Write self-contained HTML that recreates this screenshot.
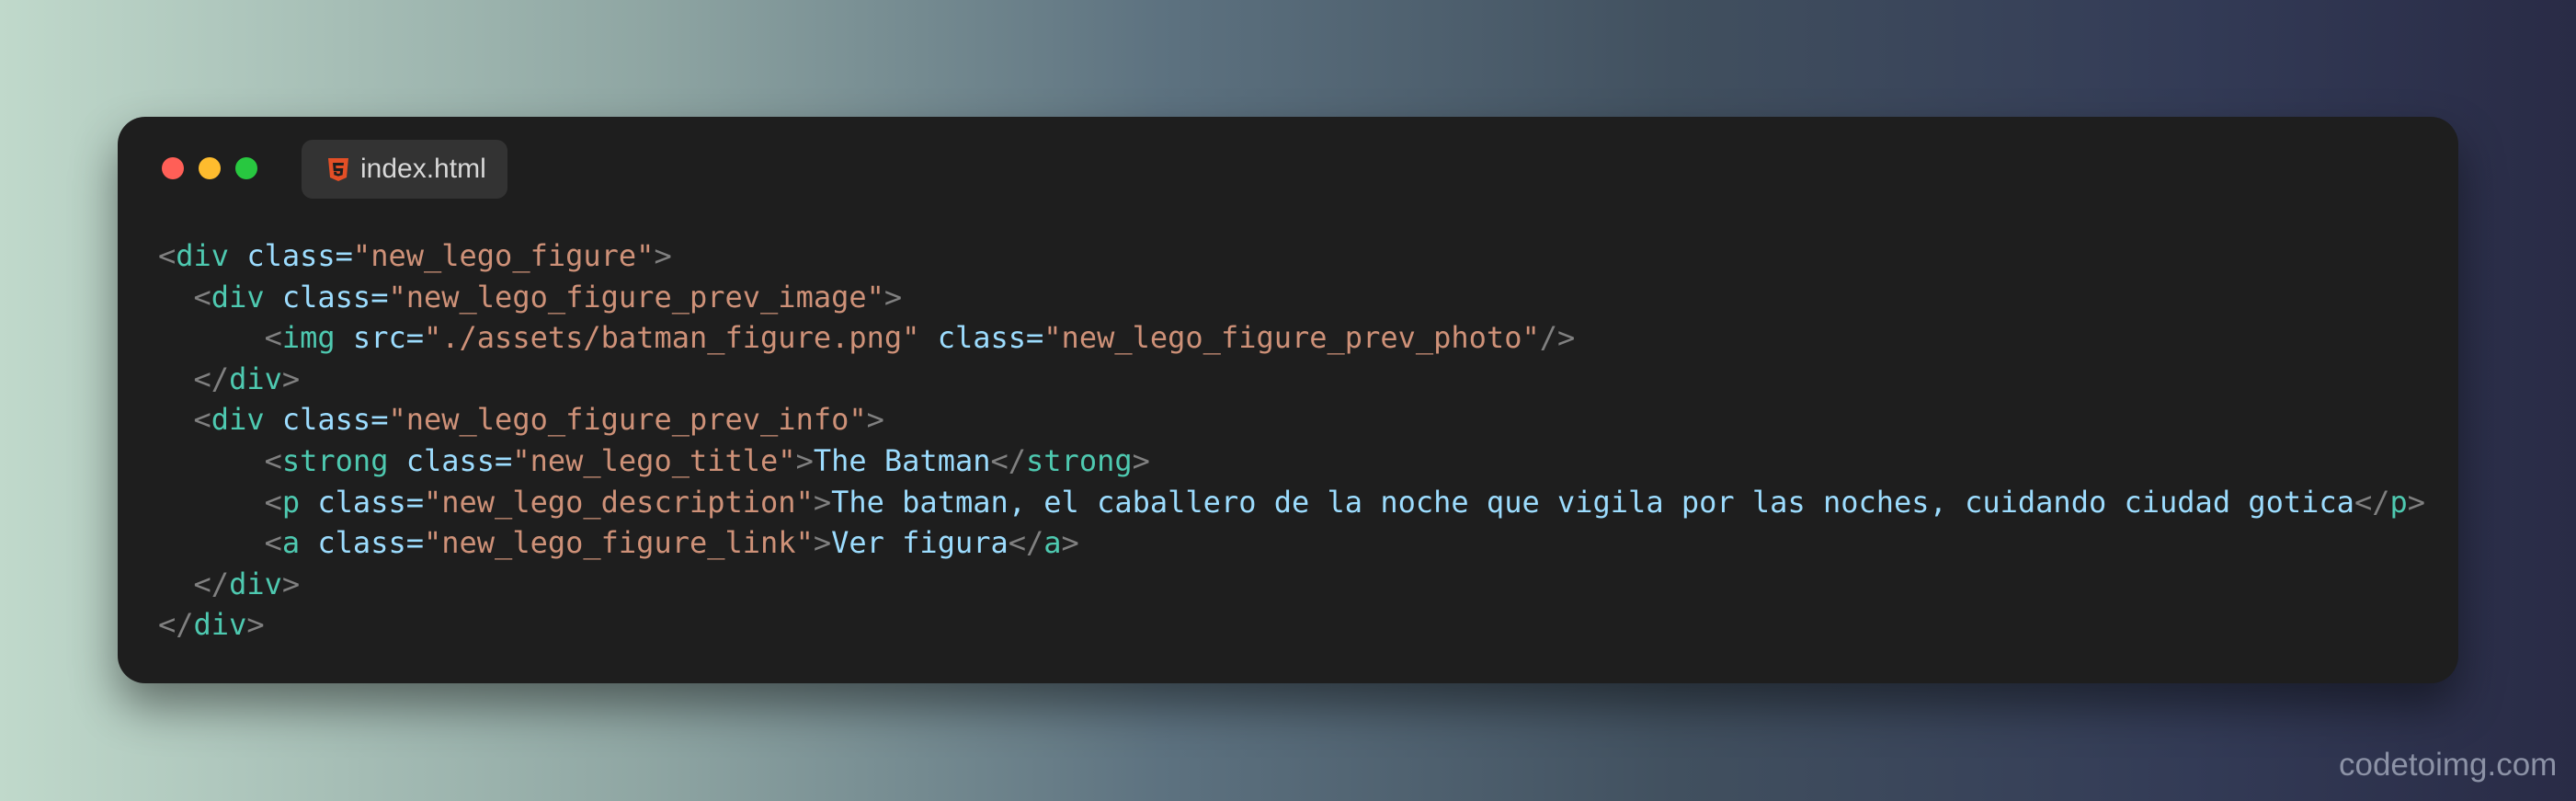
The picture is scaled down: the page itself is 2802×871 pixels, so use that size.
<!DOCTYPE html>
<html><head><meta charset="utf-8"><style>
html,body{margin:0;padding:0;width:2802px;height:871px;overflow:hidden}
body{background:linear-gradient(90deg,#c0d9cb 0%,#8fa6a3 25%,#5d7280 45%,#41505f 65%,#333b56 85%,#292b46 100%);position:relative;font-family:"Liberation Sans",sans-serif}
.win{position:absolute;left:128px;top:127px;width:2546px;height:616px;background:#1e1e1e;border-radius:30px;box-shadow:0 25px 50px rgba(0,0,0,.45)}
.dot{position:absolute;top:171px;width:24px;height:24px;border-radius:50%}
.tab{position:absolute;left:328px;top:152px;width:224px;height:64px;background:#333;border-radius:12px}
.tab span{position:absolute;left:64px;top:15px;font-size:30px;color:#d8d8d8}
pre{position:absolute;left:172px;top:256px;margin:0;font-family:"DejaVu Sans Mono","Liberation Mono",monospace;font-size:32px;line-height:44.6px;color:#9cdcfe}
.b{color:#808080}.t{color:#4ec9b0}.a{color:#9cdcfe}.s{color:#ce9178}
.wm{position:absolute;left:2544px;top:812px;font-size:35px;color:#8c92a6}
</style></head><body>
<div class="win"></div>
<div class="dot" style="left:176px;background:#ff5f57"></div>
<div class="dot" style="left:216px;background:#febc2e"></div>
<div class="dot" style="left:256px;background:#28c840"></div>
<div class="tab">
<svg style="position:absolute;left:28px;top:20px" width="24" height="25" viewBox="0 0 24 25"><path d="M1 0h22l-2 21-9 4-9-4z" fill="#e34f26"/><path d="M6 5h12l-.4 3H9.2l.3 3h7.8l-.7 7.3L12 19.6l-4.6-1.3-.3-3.4h3l.1 1.6 1.8.5 1.8-.5.2-2.4H6.8z" fill="#1e1e1e"/></svg>
<span>index.html</span></div>
<pre><span class="b">&lt;</span><span class="t">div</span> <span class="a">class</span>=<span class="s">"new_lego_figure"</span><span class="b">&gt;</span>
  <span class="b">&lt;</span><span class="t">div</span> <span class="a">class</span>=<span class="s">"new_lego_figure_prev_image"</span><span class="b">&gt;</span>
      <span class="b">&lt;</span><span class="t">img</span> <span class="a">src</span>=<span class="s">"./assets/batman_figure.png"</span> <span class="a">class</span>=<span class="s">"new_lego_figure_prev_photo"</span><span class="b">/&gt;</span>
  <span class="b">&lt;/</span><span class="t">div</span><span class="b">&gt;</span>
  <span class="b">&lt;</span><span class="t">div</span> <span class="a">class</span>=<span class="s">"new_lego_figure_prev_info"</span><span class="b">&gt;</span>
      <span class="b">&lt;</span><span class="t">strong</span> <span class="a">class</span>=<span class="s">"new_lego_title"</span><span class="b">&gt;</span>The Batman<span class="b">&lt;/</span><span class="t">strong</span><span class="b">&gt;</span>
      <span class="b">&lt;</span><span class="t">p</span> <span class="a">class</span>=<span class="s">"new_lego_description"</span><span class="b">&gt;</span>The batman, el caballero de la noche que vigila por las noches, cuidando ciudad gotica<span class="b">&lt;/</span><span class="t">p</span><span class="b">&gt;</span>
      <span class="b">&lt;</span><span class="t">a</span> <span class="a">class</span>=<span class="s">"new_lego_figure_link"</span><span class="b">&gt;</span>Ver figura<span class="b">&lt;/</span><span class="t">a</span><span class="b">&gt;</span>
  <span class="b">&lt;/</span><span class="t">div</span><span class="b">&gt;</span>
<span class="b">&lt;/</span><span class="t">div</span><span class="b">&gt;</span></pre>
<div class="wm">codetoimg.com</div>
</body></html>
